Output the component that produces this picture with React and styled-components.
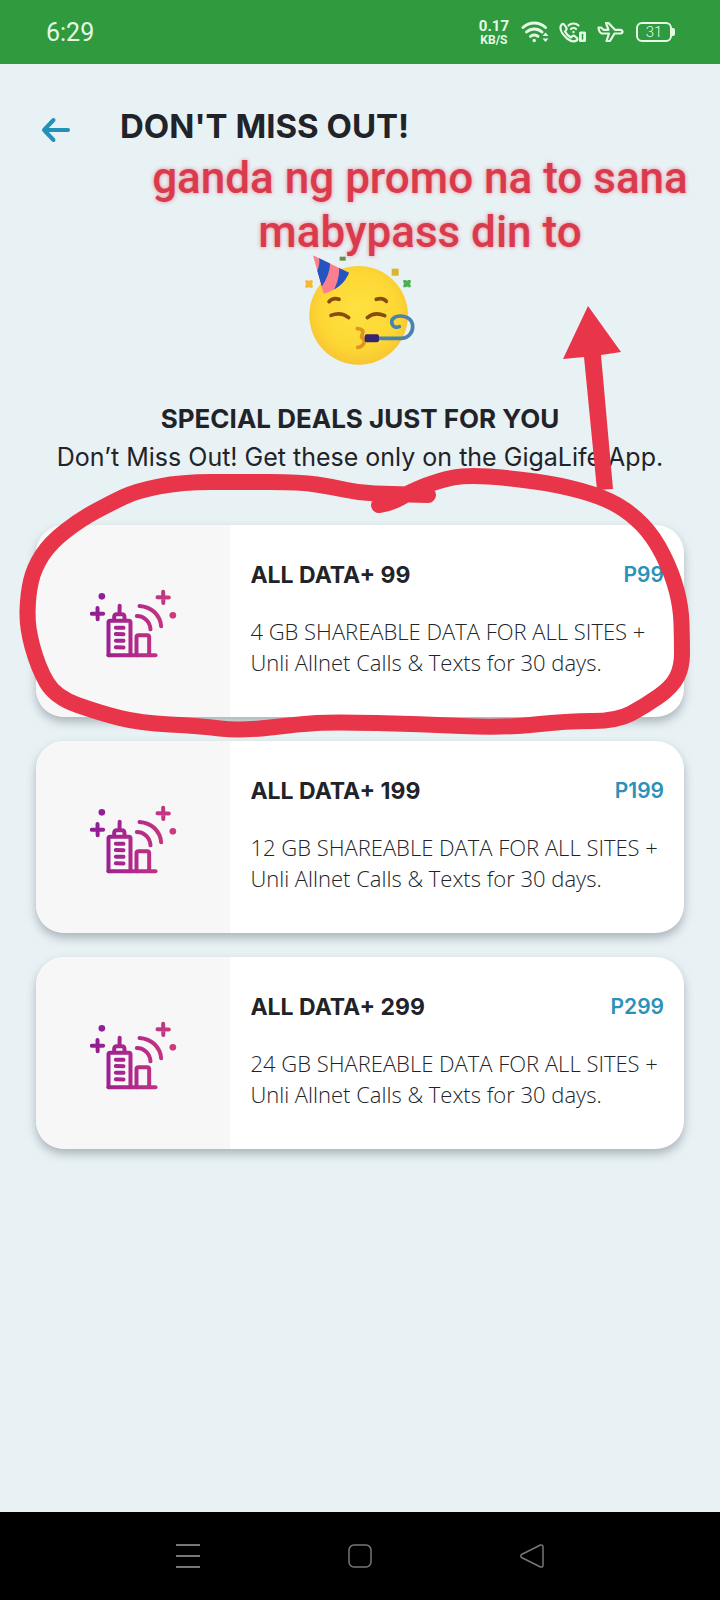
import React from 'react'
import styled, { createGlobalStyle } from 'styled-components'

const GlobalStyle = createGlobalStyle`
  *, *::before, *::after {
    box-sizing: border-box;
  }
  body {
    margin: 0;
    background: #e8f1f4;
    font-family: Inter, "Liberation Sans", sans-serif;
  }
`

const Screen = styled.div`
  color: #212329;
  display: flex;
  flex-direction: column;
  min-height: 100vh;
  position: relative;
`

const StatusBar = styled.div`
  align-items: center;
  background: #2f9b3e;
  color: #e6f9e6;
  display: flex;
  font-family: Roboto, sans-serif;
  height: 64px;
  justify-content: space-between;
  padding: 0 46px;
`

const Clock = styled.time`
  font-size: 25px;
`

const StatusIcons = styled.div`
  align-items: center;
  display: flex;
  gap: 10px;
`

const Speed = styled.div`
  align-items: center;
  display: flex;
  flex-direction: column;
  font-family: Roboto, sans-serif;
  font-weight: 700;
  margin-right: 2px;
`

const SpeedValue = styled.span`
  font-size: 15px;
  line-height: 15px;
`

const SpeedUnit = styled.span`
  font-size: 12px;
  line-height: 12px;
`

const Battery = styled.div`
  align-items: center;
  border: 2px solid #e6f9e6;
  border-radius: 6px;
  display: flex;
  font-size: 15px;
  font-weight: 300;
  height: 20px;
  justify-content: center;
  margin: 0 2px 0 2px;
  position: relative;
  width: 36px;
  &::after {
    background: #e6f9e6;
    border-radius: 0 2px 2px 0;
    content: '';
    height: 8px;
    left: 34px;
    position: absolute;
    top: 4px;
    width: 3px;
  }
`

const Header = styled.header`
  align-items: center;
  display: flex;
  gap: 48px;
  padding: 40px 40px 0;
`

const BackButton = styled.button`
  background: none;
  border: 0;
  cursor: pointer;
  height: 32px;
  padding: 6px 0 0;
  width: 32px;
  & > svg {
    display: block;
  }
`

const Title = styled.h1`
  font-size: 33px;
  font-weight: 700;
  line-height: 44px;
  margin: 0;
`

const Content = styled.main`
  display: flex;
  flex: 1;
  flex-direction: column;
  padding: 104px 36px 40px;
`

const Hero = styled.section`
  align-items: center;
  display: flex;
  flex-direction: column;
  text-align: center;
`

const Heading = styled.h2`
  font-size: 26px;
  font-weight: 700;
  line-height: 36px;
  margin: 34px 0 0;
`

const Lead = styled.p`
  font-size: 25px;
  line-height: 36px;
  margin: 2px 0 0;
`

const Deals = styled.ul`
  display: grid;
  gap: 24px;
  list-style: none;
  margin: 50px 0 0;
  padding: 0;
`

const Card = styled.li`
  background: #fff;
  border-radius: 28px;
  box-shadow: 0 5px 10px rgba(70, 85, 95, 0.38);
  display: grid;
  grid-template-columns: 30% auto;
  min-height: 192px;
  overflow: hidden;
`

const CardIcon = styled.div`
  align-items: center;
  background: #f7f7f7;
  display: flex;
  justify-content: center;
  padding-top: 3px;
`

const CardBody = styled.div`
  padding: 34px 20px 30px;
`

const CardTop = styled.div`
  display: flex;
  justify-content: space-between;
  line-height: 32px;
`

const DealName = styled.h3`
  font-size: 23px;
  font-weight: 700;
  margin: 0;
`

const Price = styled.span`
  color: #2a92b8;
  font-size: 21px;
  font-weight: 600;
`

const Description = styled.p`
  font-family: "Open Sans", sans-serif;
  font-size: 22px;
  font-weight: 300;
  line-height: 31px;
  margin: 25px 0 0;
  white-space: pre-line;
`

const NavBar = styled.nav`
  background: #000;
  display: grid;
  grid-template-columns: repeat(3, 1fr);
  height: 88px;
  padding: 0 102px;
`

const NavButton = styled.button`
  background: none;
  border: 0;
  cursor: pointer;
  padding: 0;
  & > svg {
    display: block;
    margin: 0 auto;
  }
`

const Note = styled.p`
  color: #d93a4c;
  font-family: Roboto, sans-serif;
  font-size: 44px;
  font-weight: 500;
  left: 120px;
  line-height: 54px;
  margin: 0;
  position: absolute;
  right: 0;
  text-align: center;
  text-shadow: 0 0 4px #e58a96;
  top: 151px;
  white-space: pre-line;
`

const Marker = styled.svg`
  height: auto;
  left: 0;
  pointer-events: none;
  position: absolute;
  top: 0;
  width: 100%;
`

const WifiIcon = () => (
  <svg width="28" height="22" viewBox="0 0 28 22" fill="none" stroke="#e6f9e6" strokeWidth="3" strokeLinecap="round">
    <path d="M2 6.500C8.500 0.500 18 0.500 24.500 6.500" />
    <path d="M5.500 11C10 7 16.500 7 21 11" />
    <path d="M9.500 15.300C11.500 13.500 15 13.500 17 15.300" />
    <circle cx="13.200" cy="19.500" r="1" fill="#e6f9e6" strokeWidth="1.500" />
    <path d="M21.500 15l3-3.500 3 3.500zM21.500 17.500l3 3.500 3-3.500z" fill="#e6f9e6" stroke="none" />
  </svg>
)

const CallIcon = () => (
  <svg width="28" height="22" viewBox="0 0 28 22" fill="none" stroke="#e6f9e6" strokeWidth="2.200" strokeLinecap="round" strokeLinejoin="round">
    <path d="M2 4.500Q4 1.500 5.500 4L7.500 7Q8 8.500 6 10.500Q8 14.500 12 16.500Q14 14 15.500 15L18 17Q19 18.500 17.500 19.500Q14 22 8 17.500Q2 12 1.500 7.500Q1.300 6 2 4.500Z" />
    <path d="M9.500 4.500C12 1.800 17 1.800 19.500 4.500M12 8C13.500 6.300 15.500 6.300 17 8" />
    <circle cx="14.500" cy="11" r="1.200" fill="#e6f9e6" stroke="none" />
    <rect x="20" y="10.500" width="7" height="10.500" rx="1.500" fill="#e6f9e6" stroke="none" />
    <path d="M23.500 13.500v4.500" stroke="#2f9b3e" strokeWidth="1.500" />
  </svg>
)

const PlaneIcon = () => (
  <svg width="27" height="22" viewBox="0 0 27 22" fill="none" stroke="#e6f9e6" strokeWidth="2.200" strokeLinejoin="round">
    <path d="M11.500 8.800L9 2H11.500L18 8.800H23Q25.500 9 25.500 10.800Q25.500 12.500 23 12.500H17.500L13 20H9.500L12 12.500H5Q2 12 1.500 6.500H4L6.500 8.800Z" />
  </svg>
)

const BackArrow = () => (
  <svg width="32" height="28" viewBox="0 0 32 28" fill="none" stroke="#2390b8" strokeWidth="4" strokeLinecap="round" strokeLinejoin="round">
    <path d="M28 14H4M13.500 4L4 14l9.500 10" />
  </svg>
)

const PartyFace = () => (
  <svg width="114" height="115" viewBox="40 20 342 345" fill="none" role="img" aria-label="Partying face">
    <defs>
      <radialGradient id="face" cx="0.5" cy="0.45" r="0.55">
        <stop offset="0" stopColor="#fde13f" />
        <stop offset="0.7" stopColor="#fdd835" />
        <stop offset="1" stopColor="#f8c532" />
      </radialGradient>
      <clipPath id="hat">
        <path d="M70 30L178 82Q160 128 102 145Z" />
      </clipPath>
    </defs>
    <circle cx="207" cy="210" r="148" fill="url(#face)" />
    <g clipPath="url(#hat)">
      <path d="M60 20h130v130H60z" fill="#fb7f8e" />
      <path d="M88 34L122 50Q120 90 96 124L82 78Q92 58 88 34Z" fill="#2354c0" />
      <path d="M148 60L182 80L162 120L128 142Q152 100 148 60Z" fill="#2354c0" />
    </g>
    <path d="M150 34h18v12h-18z" fill="#65914b" />
    <path d="M306 70h21v21h-21z" fill="#ddb52b" />
    <path d="M47 105h8l3 3 3-3h8v8l-3 3 3 3v8h-8l-3-3-3 3h-8v-8l3-3-3-3z" fill="#f5b82e" />
    <path d="M341 104h8l3 3 3-3h8v8l-3 3 3 3v8h-8l-3-3-3 3h-8v-8l3-3-3-3z" fill="#4caf50" />
    <g stroke="#8a4c0c" strokeWidth="11" strokeLinecap="round">
      <path d="M118 169Q130 156 148 162" />
      <path d="M260 162Q279 156 290 168" />
      <path d="M124 210Q154 198 177 217" />
      <path d="M233 217Q255 198 285 211" />
    </g>
    <path d="M203 250Q225 251 218 267Q213 275 219 279Q229 286 220 298Q213 307 204 306" stroke="#dd9420" strokeWidth="11" strokeLinecap="round" />
    <path d="M262 279H334C356 279 369 262 369 244C369 222 350 212 332 212C313 212 303 223 307 235C310 245 320 248 329 244" stroke="#4983ac" strokeWidth="11" strokeLinecap="round" />
    <rect x="225" y="267" width="43" height="24" rx="6" fill="#3a2470" />
  </svg>
)

const TowerIcon = () => (
  <svg width="87" height="70" viewBox="60 50 260 210" fill="none" stroke="url(#tower)" strokeWidth="12" strokeLinecap="round" strokeLinejoin="round" aria-hidden="true">
    <defs>
      <linearGradient id="tower" gradientUnits="userSpaceOnUse" x1="60" y1="130" x2="320" y2="130">
        <stop offset="0" stopColor="#8d1c94" />
        <stop offset="0.5" stopColor="#b1298a" />
        <stop offset="1" stopColor="#cb3b7c" />
      </linearGradient>
    </defs>
    <path d="M115 252V153Q115 148 120 148H176Q181 148 181 153V252" />
    <path d="M115 252H256" />
    <path d="M132 146V138Q132 129 140 129H155Q163 129 163 138V146M148 128L148.500 103" />
    <path d="M137 169L160 169.500M137 188L160 188.500M137 208L160 208.500M137 228L160 228.500" />
    <path d="M199 252V198Q199 192 205 192H231Q237 192 237 198V252" />
    <path d="M200 134C222 134 240 152 241 174M208 104C245 106 270 132 273 165" />
    <path d="M65 127L99 127.500M82 110L82.500 144M262 78L296 78.500M279 61L279.500 95" />
    <circle cx="95" cy="75" r="10" fill="#921f95" stroke="none" />
    <circle cx="308" cy="132" r="10" fill="#cb3b7c" stroke="none" />
  </svg>
)

// hand-drawn loop, joined through the midpoints of its samples
const LOOP = [
  [379, 505], [392, 503], [410, 492], [440, 480], [467, 475], [510, 478], [560, 485], [603, 497],
  [631, 513], [654, 537], [672, 573], [681, 607], [682, 640], [682, 667], [672, 687],
  [645, 706], [617, 721], [567, 721], [503, 728], [420, 724], [333, 722], [300, 724],
  [240, 731], [200, 726], [140, 723], [100, 713], [55, 697], [38, 667], [27, 627],
  [28, 594], [34, 568], [50, 543], [81, 519], [111, 503], [136, 491], [182, 482],
  [240, 482], [300, 482], [333, 487], [360, 493], [390, 494], [428, 495],
]

const toPath = (points) => {
  const curves = points.slice(1, -1).map(([x, y], i) => {
    const next = points[i + 2]
    return `Q${x} ${y} ${(x + next[0]) / 2} ${(y + next[1]) / 2}`
  })
  return `M${points[0].join(' ')}${curves.join('')}L${points[points.length - 1].join(' ')}`
}

const DEALS = [
  { name: 'ALL DATA+ 99', price: 'P99', data: '4 GB' },
  { name: 'ALL DATA+ 199', price: 'P199', data: '12 GB' },
  { name: 'ALL DATA+ 299', price: 'P299', data: '24 GB' },
]

const Deal = ({ name, price, data }) => (
  <Card>
    <CardIcon><TowerIcon /></CardIcon>
    <CardBody>
      <CardTop>
        <DealName>{name}</DealName>
        <Price>{price}</Price>
      </CardTop>
      <Description>{`${data} SHAREABLE DATA FOR ALL SITES +\nUnli Allnet Calls & Texts for 30 days.`}</Description>
    </CardBody>
  </Card>
)

const App = () => (
  <Screen>
    <GlobalStyle />
    <StatusBar>
      <Clock>6:29</Clock>
      <StatusIcons>
        <Speed>
          <SpeedValue>0.17</SpeedValue>
          <SpeedUnit>KB/S</SpeedUnit>
        </Speed>
        <WifiIcon />
        <CallIcon />
        <PlaneIcon />
        <Battery>31</Battery>
      </StatusIcons>
    </StatusBar>
    <Header>
      <BackButton type="button" aria-label="Back"><BackArrow /></BackButton>
      <Title>DON'T MISS OUT!</Title>
    </Header>
    <Content>
      <Hero>
        <PartyFace />
        <Heading>SPECIAL DEALS JUST FOR YOU</Heading>
        <Lead>Don’t Miss Out! Get these only on the GigaLife App.</Lead>
      </Hero>
      <Deals>
        {DEALS.map((deal) => <Deal key={deal.name} {...deal} />)}
      </Deals>
    </Content>
    <NavBar>
      <NavButton type="button" aria-label="Recent apps">
        <svg width="24" height="24" viewBox="0 0 24 24" stroke="#777" strokeWidth="2">
          <path d="M0 1h24M0 12h24M0 23h24" />
        </svg>
      </NavButton>
      <NavButton type="button" aria-label="Home">
        <svg width="24" height="24" viewBox="0 0 24 24" fill="none" stroke="#777" strokeWidth="1.500">
          <rect x="1" y="1" width="22" height="22" rx="5" />
        </svg>
      </NavButton>
      <NavButton type="button" aria-label="Go back">
        <svg width="24" height="24" viewBox="0 0 24 24" fill="none" stroke="#777" strokeWidth="1.500" strokeLinejoin="round">
          <path d="M1.500 10.500L20.500 1Q23 0.500 23 3V21Q23 23.500 20.500 23L1.500 13.500Q0 12 1.500 10.500Z" />
        </svg>
      </NavButton>
    </NavBar>
    <Note>{'ganda ng promo na to sana\nmabypass din to'}</Note>
    <Marker viewBox="0 0 720 1600" aria-hidden="true">
      <path d={toPath(LOOP)} fill="none" stroke="#e93549" strokeWidth="16" strokeLinecap="round" strokeLinejoin="round" />
      <path d="M588 306L621 352L601 355L613 489L597 490L584 357L563 359Z" fill="#e93549" />
    </Marker>
  </Screen>
)

export default App
